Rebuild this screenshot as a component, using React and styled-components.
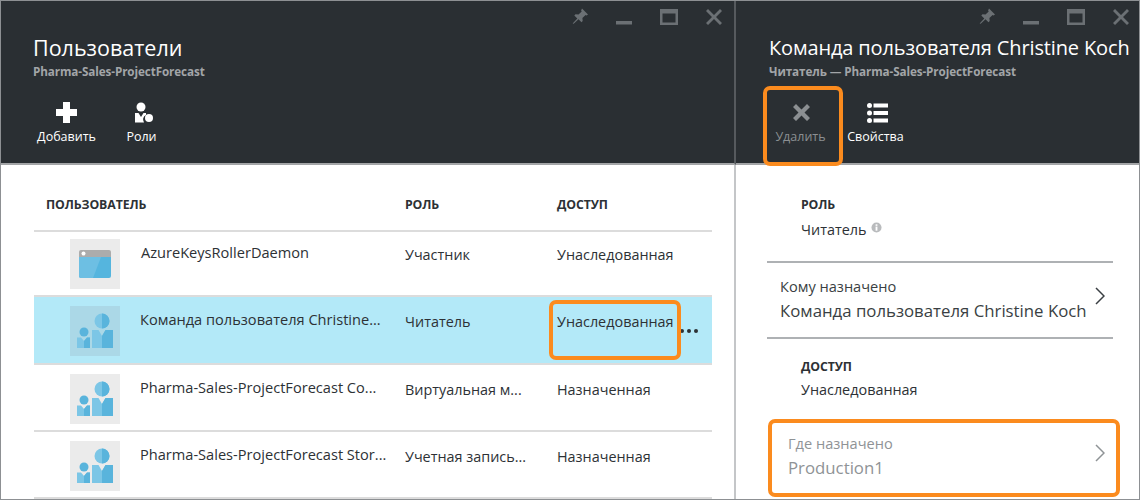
import React from 'react';
import styled, { createGlobalStyle } from 'styled-components';

const ORANGE = '#fb8b1e';

const Global = createGlobalStyle`
  html, body { margin: 0; padding: 0; background: #fff; }
  * { box-sizing: border-box; }
`;

const Frame = styled.div`
  display: flex;
  width: 1140px;
  height: 500px;
  overflow: hidden;
  border: 1px solid #8d9093;
  font-family: "Open Sans", "Noto Sans", sans-serif;
  color: #2d3135;
`;

const Blade = styled.section`
  flex: ${p => (p.$width ? `0 0 ${p.$width}px` : '1 1 0')};
  min-width: 0;
  height: 100%;
  border-right: ${p => (p.$width ? '2px solid #c4c6c8' : 'none')};
`;

const Header = styled.header`
  height: 164px;
  background: #2a2f33;
  border-bottom: 2px solid #a3a5a7;
  padding: 0 0 0 ${p => p.$pad}px;
  margin-right: ${p => (p.$flush ? '-2px' : '0')};
  border-right: ${p => (p.$flush ? '2px solid #565a5e' : 'none')};
`;

const WindowBar = styled.div`
  display: flex;
  justify-content: flex-end;
  align-items: flex-start;
  height: 33px;
  padding: 7px ${p => p.$right}px 0 0;
  gap: 27px;
`;

const WindowIcon = styled.svg`
  display: block;
  width: 18px;
  height: 18px;
  fill: #6b7074;
`;

const Title = styled.h1`
  margin: 0;
  font-size: ${p => p.$size}px;
  line-height: 28px;
  font-weight: 400;
  color: #fff;
  white-space: nowrap;
  letter-spacing: ${p => p.$spacing}px;
`;

const Subtitle = styled.div`
  font-size: 11.7px;
  line-height: 15px;
  margin-top: 2px;
  font-weight: 700;
  color: #a2a5a8;
  letter-spacing: -0.1px;
  white-space: nowrap;
`;

const Commands = styled.div`
  display: flex;
  margin: 22px 0 0 ${p => p.$shift}px;
`;

const Command = styled.div`
  position: relative;
  width: 75px;
  display: flex;
  flex-direction: column;
  align-items: center;
  color: ${p => (p.$disabled ? '#8b8f92' : '#fff')};
`;

const CommandIcon = styled.svg`
  display: block;
  width: 24px;
  height: 24px;
  fill: currentColor;
`;

const CommandLabel = styled.span`
  margin-top: 3px;
  font-size: 12.5px;
  line-height: 18px;
  white-space: nowrap;
`;

const Highlight = styled.div`
  position: absolute;
  inset: ${p => p.$inset};
  border: 4px solid ${ORANGE};
  border-radius: 7px;
  pointer-events: none;
`;

const Table = styled.div`
  padding: 0 22px 0 33px;
`;

const HeadRow = styled.div`
  display: grid;
  grid-template-columns: 359px 152px 1fr;
  height: 67px;
  padding: 31px 0 0 12px;
  border-bottom: 2px solid #dcdcdc;
`;

const HeadCell = styled.div`
  font-size: 12.3px;
  line-height: 18px;
  font-weight: 700;
  letter-spacing: -0.1px;
  text-transform: uppercase;
`;

const Row = styled.div`
  display: grid;
  grid-template-columns: 50px 285px 152px 1fr;
  height: ${p => p.$height}px;
  padding: ${p => p.$top}px 0 0 36px;
  background: ${p => (p.$selected ? '#b3e9f8' : 'transparent')};
  border-bottom: 2px solid #dcdcdc;
`;

const Avatar = styled.div`
  width: 50px;
  height: 50px;
  display: flex;
  align-items: center;
  justify-content: center;
  background: ${p => (p.$selected ? '#abd8e7' : '#ebebeb')};
`;

const NameCell = styled.div`
  padding: 3px 0 0 ${p => p.$indent}px;
  font-size: 14.6px;
  line-height: 20px;
  white-space: nowrap;
  overflow: hidden;
`;

const Cell = styled.div`
  position: relative;
  padding-top: 6px;
  font-size: 14.4px;
  line-height: 20px;
  white-space: nowrap;
`;

const MoreDots = styled.span`
  position: absolute;
  left: 123px;
  top: 23px;
  display: flex;
  gap: 3px;
`;

const Dot = styled.i`
  display: block;
  width: 4px;
  height: 4px;
  border-radius: 50%;
  background: #2d3135;
`;

const Details = styled.div`
  padding: 0 26px 0 31px;
`;

const Field = styled.div`
  height: ${p => p.$height}px;
  padding: ${p => p.$top}px 0 0 34px;
`;

const FieldLabel = styled.div`
  font-size: 12.3px;
  line-height: 18px;
  font-weight: 700;
  letter-spacing: -0.1px;
  text-transform: uppercase;
`;

const FieldValue = styled.div`
  display: flex;
  align-items: center;
  gap: 5px;
  margin-top: ${p => p.$gap}px;
  font-size: 14.4px;
  line-height: 20px;
`;

const InfoIcon = styled.svg`
  width: 11px;
  height: 11px;
  margin-top: -5px;
`;

const LinkRow = styled.div`
  position: relative;
  display: flex;
  align-items: center;
  justify-content: space-between;
  height: ${p => p.$height}px;
  color: ${p => (p.$muted ? '#8f9396' : '#3a3f43')};
  padding: 0 8px ${p => (p.$lined ? 0 : 3)}px 13px;
  border-top: ${p => (p.$lined ? '2px solid #aeb1b4' : 'none')};
  border-bottom: ${p => (p.$lined ? '2px solid #aeb1b4' : 'none')};
`;

const LinkText = styled.div`
  padding-left: ${p => p.$indent || 0}px;
  white-space: nowrap;
`;

const LinkLabel = styled.div`
  font-size: 14.6px;
  line-height: 19px;
`;

const LinkValue = styled.div`
  margin-top: 2px;
  font-size: 16.8px;
  line-height: 25px;
`;

const Chevron = styled.svg`
  display: block;
  width: 10px;
  height: 18px;
  margin-bottom: 8px;
  fill: none;
  stroke: currentColor;
  stroke-width: 1.5;
`;

function WindowButtons({ right }) {
  return (
    <WindowBar $right={right}>
      <WindowIcon viewBox="-1.5 0 18 18">
        <path d="M10.5 0.5l6 6-1.4 1-1-.6-3.2 3.2.3 3-1.2 1.1-3-3-4.8 4.6-1.1-.3 4.7-5-3-3 1.2-1.2 3 .3 3.2-3.200-.6-1z" />
      </WindowIcon>
      <WindowIcon viewBox="0 0 18 18">
        <rect x="1" y="13" width="16" height="3.500" />
      </WindowIcon>
      <WindowIcon viewBox="0 0 18 18">
        <path d="M0 1h18v16H0z M2.500 5.500v9h13v-9z" fillRule="evenodd" />
      </WindowIcon>
      <WindowIcon viewBox="0 0 18 18">
        <path d="M3 1l6 6 6-6 2 2-6 6 6 6-2 2-6-6-6 6-2-2 6-6-6-6z" />
      </WindowIcon>
    </WindowBar>
  );
}

function GroupIcon() {
  return (
    <svg width="36" height="36" viewBox="0 0 36 36">
      <circle cx="25" cy="8" r="7.500" fill="#7cc6e6" />
      <path d="M25 .5a7.500 7.500 0 0 1 0 15z" fill="#59b4dc" />
      <path d="M15 17h6.500l3.500 6 3.500-6H36v18H15z" fill="#7cc6e6" />
      <path d="M25 23l3.500-6H36v18H25z" fill="#59b4dc" />
      <circle cx="7" cy="19" r="4.500" fill="#59b4dc" />
      <path d="M0 24.500h4L7 28l3-3.500h3V35H0z" fill="#7cc6e6" />
      <path d="M7 28l3-3.500h3V35H7z" fill="#59b4dc" />
    </svg>
  );
}

function AppIcon() {
  return (
    <svg width="32" height="28" viewBox="0 0 32 28">
      <path d="M2 0h28a2 2 0 0 1 2 2v5H0V2a2 2 0 0 1 2-2z" fill="#acacac" />
      <circle cx="4.500" cy="3.500" r="2" fill="#fff" />
      <path d="M0 7h32v19a2 2 0 0 1-2 2H2a2 2 0 0 1-2-2z" fill="#55b5de" />
      <path d="M0 7h22L14 28H2a2 2 0 0 1-2-2z" fill="#6dbfe3" />
    </svg>
  );
}

const users = [
  { name: 'AzureKeysRollerDaemon', indent: 21, role: 'Участник', access: 'Унаследованная', app: true, height: 65, top: 7 },
  { name: 'Команда пользователя Christine...', indent: 20, role: 'Читатель', access: 'Унаследованная', selected: true, height: 68, top: 9 },
  { name: 'Pharma-Sales-ProjectForecast Co...', indent: 20, role: 'Виртуальная м...', access: 'Назначенная', height: 67, top: 9 },
  { name: 'Pharma-Sales-ProjectForecast Stor...', indent: 20, role: 'Учетная запись...', access: 'Назначенная', height: 67, top: 9 },
];

export default function App() {
  return (
    <Frame>
      <Global />
      <Blade $width={735}>
        <Header $pad={32} $flush>
          <WindowButtons right={11} />
          <Title $size={21.5} $spacing={0}>Пользователи</Title>
          <Subtitle>Pharma-Sales-ProjectForecast</Subtitle>
          <Commands $shift={-4}>
            <Command>
              <CommandIcon viewBox="0 0 24 24">
                <path d="M8 1h7v7h7v7h-7v7H8v-7H1V8h7z" />
              </CommandIcon>
              <CommandLabel>Добавить</CommandLabel>
            </Command>
            <Command>
              <CommandIcon viewBox="0 0 24 24">
                <circle cx="11" cy="6" r="4.500" />
                <path d="M5 12h3.500L11 16l2.500-4H16v2a5 5 0 0 0-2 7.500H5z" />
                <circle cx="19" cy="17" r="4" />
              </CommandIcon>
              <CommandLabel>Роли</CommandLabel>
            </Command>
          </Commands>
        </Header>
        <Table>
          <HeadRow>
            <HeadCell>Пользователь</HeadCell>
            <HeadCell>Роль</HeadCell>
            <HeadCell>Доступ</HeadCell>
          </HeadRow>
          {users.map(user => (
            <Row key={user.name} $selected={user.selected} $height={user.height} $top={user.top}>
              <Avatar $selected={user.selected}>
                {user.app ? <AppIcon /> : <GroupIcon />}
              </Avatar>
              <NameCell $indent={user.indent}>{user.name}</NameCell>
              <Cell>{user.role}</Cell>
              <Cell>
                {user.access}
                {user.selected && (
                  <>
                    <MoreDots>
                      <Dot />
                      <Dot />
                      <Dot />
                    </MoreDots>
                    <Highlight $inset="-6px 31px 3px -8px" />
                  </>
                )}
              </Cell>
            </Row>
          ))}
        </Table>
      </Blade>
      <Blade>
        <Header $pad={33}>
          <WindowButtons right={9} />
          <Title $size={20} $spacing={-0.14}>Команда пользователя Christine Koch</Title>
          <Subtitle>Читатель — Pharma-Sales-ProjectForecast</Subtitle>
          <Commands $shift={-6}>
            <Command $disabled>
              <CommandIcon viewBox="0 0 24 24">
                <path d="M7 3l5.500 5.500L18 3l3 3-5.500 5.500L21 17l-3 3-5.500-5.500L7 20l-3-3 5.500-5.500L4 6z" />
              </CommandIcon>
              <CommandLabel>Удалить</CommandLabel>
              <Highlight $inset="-15px -5px -20px 0" />
            </Command>
            <Command>
              <CommandIcon viewBox="0 0 24 24">
                <circle cx="5.500" cy="4.500" r="2.500" />
                <rect x="9.500" y="2.500" width="14.500" height="4" />
                <circle cx="5.500" cy="12" r="2.500" />
                <rect x="9.500" y="10" width="14.500" height="4" />
                <circle cx="5.500" cy="19.500" r="2.500" />
                <rect x="9.500" y="17.500" width="14.500" height="4" />
              </CommandIcon>
              <CommandLabel>Свойства</CommandLabel>
            </Command>
          </Commands>
        </Header>
        <Details>
          <Field $height={96} $top={31}>
            <FieldLabel>Роль</FieldLabel>
            <FieldValue $gap={6}>
              Читатель
              <InfoIcon viewBox="0 0 12 12">
                <circle cx="6" cy="6" r="5.500" fill="#b9bbbd" />
                <rect x="5" y="5" width="2" height="4.500" fill="#fff" />
                <rect x="5" y="2.500" width="2" height="1.700" fill="#fff" />
              </InfoIcon>
            </FieldValue>
          </Field>
          <LinkRow $lined $height={78}>
            <LinkText>
              <LinkLabel>Кому назначено</LinkLabel>
              <LinkValue>Команда пользователя Christine Koch</LinkValue>
            </LinkText>
            <Chevron viewBox="0 0 10 18"><path d="M1 1l8 8-8 8" /></Chevron>
          </LinkRow>
          <Field $height={80} $top={19}>
            <FieldLabel>Доступ</FieldLabel>
            <FieldValue $gap={4}>Унаследованная</FieldValue>
          </Field>
          <LinkRow $muted $height={78}>
            <LinkText $indent={8}>
              <LinkLabel>Где назначено</LinkLabel>
              <LinkValue>Production1</LinkValue>
            </LinkText>
            <Chevron viewBox="0 0 10 18"><path d="M1 1l8 8-8 8" /></Chevron>
            <Highlight $inset="0 -7px 0 1px" />
          </LinkRow>
        </Details>
      </Blade>
    </Frame>
  );
}
